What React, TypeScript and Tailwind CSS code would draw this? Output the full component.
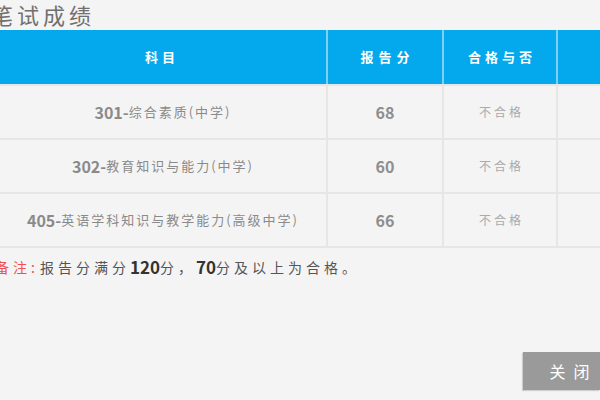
import React from "react";

const font = { fontFamily: '"Noto Sans CJK SC", "Noto Sans", sans-serif' };

const rows = [
  { code: "301-", name: "综合素质(中学)", score: "68" },
  { code: "302-", name: "教育知识与能力(中学)", score: "60" },
  { code: "405-", name: "英语学科知识与教学能力(高级中学)", score: "66" },
];

export default function App() {
  return (
    <div className="w-[600px] h-[400px] overflow-hidden bg-[#f4f4f4] flex flex-col" style={font}>
      <div className="h-[30px] flex items-start">
        <div className="ml-[-9px] mt-[1px] text-[22px] leading-[27px] text-[#707070] tracking-[4px] whitespace-nowrap">笔试成绩</div>
      </div>
      <div className="flex h-[54px] bg-[#03a9ec] text-white text-[13px] font-bold">
        <div className="w-[326px] flex items-center justify-center tracking-[4px] pl-[4px] pr-[6px]">科目</div>
        <div className="w-[2px] bg-[#7fd0f3]" />
        <div className="w-[114px] flex items-center justify-center tracking-[5px] pl-[5px]">报告分</div>
        <div className="w-[2px] bg-[#7fd0f3]" />
        <div className="w-[112px] flex items-center justify-center tracking-[4px] pl-[4px]">合格与否</div>
        <div className="w-[2px] bg-[#7fd0f3]" />
        <div className="flex-1" />
      </div>
      {rows.map((r) => (
        <div key={r.code} className="flex h-[54px] border-t-2 border-[#e6e6e6]">
          <div className="w-[326px] flex items-center justify-center text-[#8a8a8a] whitespace-nowrap">
            <span className="text-[16px] font-semibold">{r.code}</span>
            <span className="text-[13px] tracking-[2px]">{r.name}</span>
          </div>
          <div className="w-[2px] bg-[#e6e6e6]" />
          <div className="w-[114px] flex items-center justify-center text-[16px] font-semibold text-[#8e8e8e]">{r.score}</div>
          <div className="w-[2px] bg-[#e6e6e6]" />
          <div className="w-[112px] flex items-center justify-center text-[12px] text-[#aaaaaa] tracking-[3px] pl-[3px]">不合格</div>
          <div className="w-[2px] bg-[#e6e6e6]" />
          <div className="flex-1" />
        </div>
      ))}
      <div className="h-[2px] bg-[#e6e6e6]" />
      <div className="mt-[7px] ml-[-5px] flex items-center text-[14px] text-[#555] h-[24px] tracking-[4px] whitespace-nowrap">
        <span className="text-[#f05050]">备注:</span>
        <span className="ml-[1px]">报告分满分</span>
        <span className="text-[17px] font-bold text-[#333] tracking-normal">120</span>
        <span>分，</span>
        <span className="text-[17px] font-bold text-[#333] tracking-normal">70</span>
        <span>分及以上为合格。</span>
      </div>
      <div className="flex-1" />
      <div className="flex justify-end mb-[10px]">
        <div className="w-[77px] h-[38px] bg-[#9a9a9a] text-white text-[16px] flex items-center justify-center tracking-[8px] pl-[24px] shadow-[-1px_1px_1px_rgba(0,0,0,0.15)]">关闭</div>
      </div>
    </div>
  );
}
